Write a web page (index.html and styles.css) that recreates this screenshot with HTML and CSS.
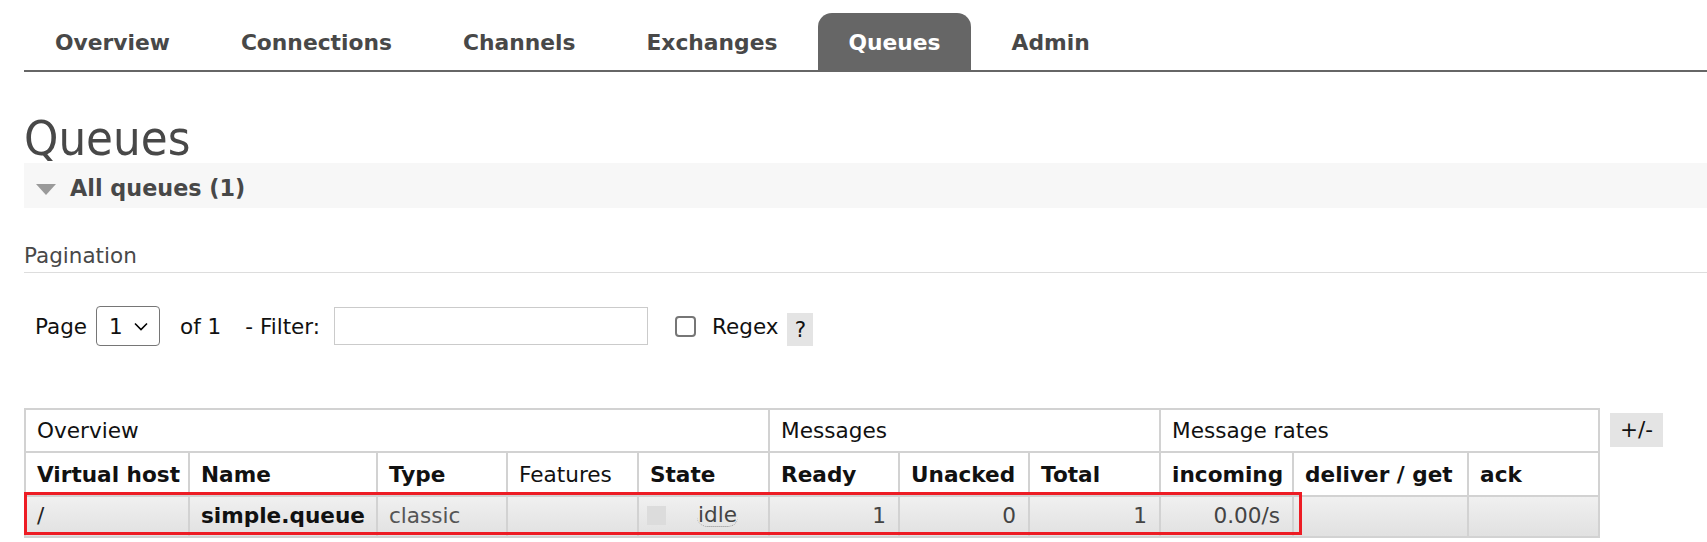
FILE: index.html
```html
<!DOCTYPE html>
<html lang="en">
<head>
<meta charset="utf-8">
<title>Queues</title>
<link rel="stylesheet" href="styles.css">
</head>
<body>
<div class="page">
  <ul class="tabs">
    <li class="tab">Overview</li>
    <li class="tab">Connections</li>
    <li class="tab">Channels</li>
    <li class="tab">Exchanges</li>
    <li class="tab tab-active">Queues</li>
    <li class="tab">Admin</li>
  </ul>

  <h1 class="title">Queues</h1>

  <div class="section-head">
    <span class="triangle"></span>
    <span>All queues (1)</span>
  </div>

  <h3 class="subhead">Pagination</h3>

  <div class="controls">
    <span class="lbl-page">Page</span>
    <span class="select">
      <select class="select-el"><option>1</option></select>
      <svg class="chev" width="14" height="9" viewBox="0 0 14 9"><path d="M1 1.5 L7 7.5 L13 1.5" fill="none" stroke="#000" stroke-width="1.6"/></svg>
    </span>
    <span class="lbl-of">of 1</span>
    <span class="lbl-filter">- Filter:</span>
    <input class="filter" type="text">
    <input class="check" type="checkbox">
    <span class="lbl-regex">Regex</span>
    <span class="help">?</span>
  </div>

  <div class="list-row">
    <div class="table-wrap">
      <table class="queues">
        <colgroup>
          <col style="width:164px"><col style="width:188px"><col style="width:130px"><col style="width:131px"><col style="width:131px">
          <col style="width:130px"><col style="width:130px"><col style="width:131px">
          <col style="width:133px"><col style="width:175px"><col style="width:131px">
        </colgroup>
        <tr class="row-group">
          <th colspan="5">Overview</th>
          <th colspan="3">Messages</th>
          <th colspan="3">Message rates</th>
        </tr>
        <tr class="row-head">
          <th class="b">Virtual host</th>
          <th class="b">Name</th>
          <th class="b">Type</th>
          <th>Features</th>
          <th class="b">State</th>
          <th class="b">Ready</th>
          <th class="b">Unacked</th>
          <th class="b">Total</th>
          <th class="b">incoming</th>
          <th class="b">deliver / get</th>
          <th class="b">ack</th>
        </tr>
        <tr class="row-data">
          <td class="dark">/</td>
          <td class="name">simple.queue</td>
          <td class="light">classic</td>
          <td></td>
          <td><span class="state"><span class="dot"></span><abbr class="idle">idle</abbr></span></td>
          <td class="num">1</td>
          <td class="num">0</td>
          <td class="num">1</td>
          <td class="num">0.00/s</td>
          <td></td>
          <td></td>
        </tr>
      </table>
      <div class="annot"></div>
    </div>
    <span class="toggle">+/-</span>
  </div>
</div>
</body>
</html>
```
FILE: styles.css
```css
* { box-sizing: border-box; }

body {
  margin: 0;
  font-family: "DejaVu Sans", "Liberation Sans", sans-serif;
  color: #484848;
  background: #fff;
}

.page { padding-left: 24px; }

.tabs {
  display: flex;
  gap: 11px;
  list-style: none;
  margin: 13px 0 0;
  padding: 0 0 0 1px;
  border-bottom: 2px solid #666;
}

.tab {
  font-size: 21.8px;
  font-weight: bold;
  line-height: 26px;
  padding: 17px 30px 14px;
  color: #484848;
  border-radius: 14px 14px 0 0;
}

.tab-active { background: #666; color: #fff; }

.title {
  font-family: "DejaVu Sans Condensed", "DejaVu Sans", sans-serif;
  font-stretch: condensed;
  font-size: 48.6px;
  font-weight: normal;
  line-height: 50px;
  margin: 41px 0 0;
  color: #484848;
}

.section-head {
  display: flex;
  align-items: center;
  gap: 14px;
  background: #f7f7f7;
  padding: 12px 0 7px 12px;
  font-size: 22.3px;
  font-weight: bold;
  line-height: 26px;
}

.triangle {
  width: 0;
  height: 0;
  border-left: 10.5px solid transparent;
  border-right: 10.5px solid transparent;
  border-top: 11px solid #9a9a9a;
  margin-top: 2px;
}

.subhead {
  font-size: 21.5px;
  font-weight: normal;
  line-height: 24px;
  margin: 36px 0 0;
  padding: 0 0 4px;
  border-bottom: 1px solid #ddd;
}

.controls {
  display: flex;
  align-items: center;
  padding: 33px 0 0 11px;
  font-size: 21.5px;
  color: #111;
}

.lbl-page { margin-right: 9px; }

.select {
  position: relative;
  display: inline-block;
  width: 64px;
  height: 40px;
}

.select-el {
  appearance: none;
  -webkit-appearance: none;
  width: 64px;
  height: 40px;
  border: 1px solid #767676;
  border-radius: 4px;
  background: #fff;
  font: inherit;
  color: #111;
  padding: 0 0 0 12px;
}

.chev {
  position: absolute;
  left: 38px;
  top: 16px;
  pointer-events: none;
}

.lbl-of { margin-left: 20px; }
.lbl-filter { margin-left: 24px; }

.filter {
  margin: 0 0 0 14px;
  width: 314px;
  height: 38px;
  border: 1px solid #cbcbcb;
  border-radius: 0;
  background: #fff;
}

.check {
  appearance: none;
  -webkit-appearance: none;
  margin: 0 0 0 27px;
  width: 21px;
  height: 21px;
  border: 2px solid #767676;
  border-radius: 4px;
  background: #fff;
}

.lbl-regex { margin-left: 16px; }

.help {
  align-self: flex-end;
  margin-left: 9px;
  width: 26px;
  height: 33px;
  line-height: 33px;
  text-align: center;
  background: #e4e4e4;
}

.list-row {
  display: flex;
  align-items: flex-start;
  gap: 10px;
  margin-top: 62px;
}

.table-wrap { position: relative; }

.queues {
  border-collapse: collapse;
  table-layout: fixed;
  width: 1574px;
  font-size: 21.6px;
  color: #111;
}

.queues th,
.queues td {
  border: 2px solid #d2d2d2;
  padding: 0 11px;
  text-align: left;
  white-space: nowrap;
  vertical-align: middle;
  font-weight: normal;
}

.queues th.b { font-weight: bold; }

.row-group th { height: 43px; }
.row-head th { height: 44px; }

.row-data td {
  height: 41px;
  background: linear-gradient(#f0f0f0, #e1e1e1);
  color: #444;
  padding-bottom: 3px;
}

.queues td.name { font-weight: bold; color: #111; }
.queues td.dark { color: #222; }
.queues td.light { color: #555; }
.queues td.num { text-align: right; padding-right: 12px; }

.state {
  display: flex;
  align-items: center;
  margin-left: -3px;
}

.dot {
  width: 19px;
  height: 19px;
  background: #dcdcdc;
}

.idle {
  margin-left: 31px;
  text-decoration: none;
  border-bottom: 1px dotted #888;
  border-radius: 0 0 10px 10px;
  padding: 0 1px;
  line-height: 22px;
}

.annot {
  position: absolute;
  left: 0;
  top: 84px;
  width: 1278px;
  height: 43px;
  border: 3px solid #ed1c24;
  pointer-events: none;
}

.toggle {
  margin-top: 5px;
  width: 53px;
  height: 34px;
  line-height: 34px;
  text-align: center;
  background: #e4e4e4;
  font-size: 21.5px;
  color: #111;
}
```
